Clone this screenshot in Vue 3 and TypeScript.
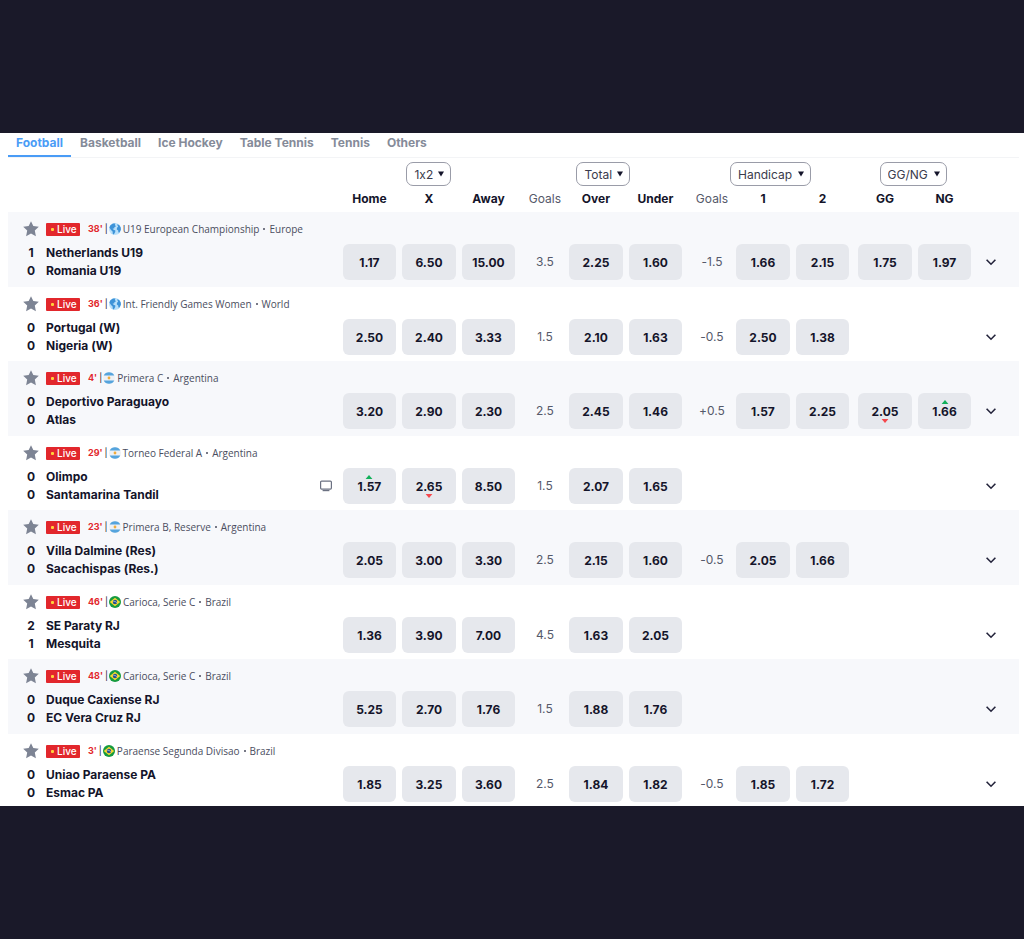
<script setup lang="ts">
import { ref } from 'vue'

type Trend = 'up' | 'down'
type Flag = 'globe' | 'argentina' | 'brazil'

interface Match {
  minute: string
  flag: Flag
  league: string
  region: string
  home: string
  away: string
  score: [number, number]
  tv?: boolean
  cells: string[]
  trends?: Record<number, Trend>
}

interface Column {
  label: string
  kind: 'odd' | 'line'
  key: string
}

const sports = ['Football', 'Basketball', 'Ice Hockey', 'Table Tennis', 'Tennis', 'Others']
const activeSport = ref('Football')

const markets = [
  { name: '1x2', span: 3, key: 'result' },
  { name: 'Total', span: 3, key: 'total' },
  { name: 'Handicap', span: 3, key: 'handicap' },
  { name: 'GG/NG', span: 2, key: 'both' },
]

const columns: Column[] = [
  { label: 'Home', kind: 'odd', key: 'home' },
  { label: 'X', kind: 'odd', key: 'draw' },
  { label: 'Away', kind: 'odd', key: 'away' },
  { label: 'Goals', kind: 'line', key: 'total-line' },
  { label: 'Over', kind: 'odd', key: 'over' },
  { label: 'Under', kind: 'odd', key: 'under' },
  { label: 'Goals', kind: 'line', key: 'handicap-line' },
  { label: '1', kind: 'odd', key: 'hc-one' },
  { label: '2', kind: 'odd', key: 'hc-two' },
  { label: 'GG', kind: 'odd', key: 'gg' },
  { label: 'NG', kind: 'odd', key: 'ng' },
]

const matches: Match[] = [
  {
    minute: "38'", flag: 'globe', league: 'U19 European Championship', region: 'Europe',
    home: 'Netherlands U19', away: 'Romania U19', score: [1, 0],
    cells: ['1.17', '6.50', '15.00', '3.5', '2.25', '1.60', '-1.5', '1.66', '2.15', '1.75', '1.97'],
  },
  {
    minute: "36'", flag: 'globe', league: 'Int. Friendly Games Women', region: 'World',
    home: 'Portugal (W)', away: 'Nigeria (W)', score: [0, 0],
    cells: ['2.50', '2.40', '3.33', '1.5', '2.10', '1.63', '-0.5', '2.50', '1.38', '', ''],
  },
  {
    minute: "4'", flag: 'argentina', league: 'Primera C', region: 'Argentina',
    home: 'Deportivo Paraguayo', away: 'Atlas', score: [0, 0],
    cells: ['3.20', '2.90', '2.30', '2.5', '2.45', '1.46', '+0.5', '1.57', '2.25', '2.05', '1.66'],
    trends: { 9: 'down', 10: 'up' },
  },
  {
    minute: "29'", flag: 'argentina', league: 'Torneo Federal A', region: 'Argentina',
    home: 'Olimpo', away: 'Santamarina Tandil', score: [0, 0], tv: true,
    cells: ['1.57', '2.65', '8.50', '1.5', '2.07', '1.65', '', '', '', '', ''],
    trends: { 0: 'up', 1: 'down' },
  },
  {
    minute: "23'", flag: 'argentina', league: 'Primera B, Reserve', region: 'Argentina',
    home: 'Villa Dalmine (Res)', away: 'Sacachispas (Res.)', score: [0, 0],
    cells: ['2.05', '3.00', '3.30', '2.5', '2.15', '1.60', '-0.5', '2.05', '1.66', '', ''],
  },
  {
    minute: "46'", flag: 'brazil', league: 'Carioca, Serie C', region: 'Brazil',
    home: 'SE Paraty RJ', away: 'Mesquita', score: [2, 1],
    cells: ['1.36', '3.90', '7.00', '4.5', '1.63', '2.05', '', '', '', '', ''],
  },
  {
    minute: "48'", flag: 'brazil', league: 'Carioca, Serie C', region: 'Brazil',
    home: 'Duque Caxiense RJ', away: 'EC Vera Cruz RJ', score: [0, 0],
    cells: ['5.25', '2.70', '1.76', '1.5', '1.88', '1.76', '', '', '', '', ''],
  },
  {
    minute: "3'", flag: 'brazil', league: 'Paraense Segunda Divisao', region: 'Brazil',
    home: 'Uniao Paraense PA', away: 'Esmac PA', score: [0, 0],
    cells: ['1.85', '3.25', '3.60', '2.5', '1.84', '1.82', '-0.5', '1.85', '1.72', '', ''],
  },
]
</script>

<template>
  <div class="page">
    <main class="panel">
      <nav class="tabs" aria-label="Sports">
        <button
          v-for="sport in sports"
          :key="sport"
          type="button"
          class="tab"
          :class="{ active: sport === activeSport }"
          @click="activeSport = sport"
        >{{ sport }}</button>
      </nav>

      <table class="board">
        <colgroup>
          <col class="c-info" />
          <col v-for="c in columns" :key="c.key" :class="`c-${c.key}`" />
          <col class="c-more" />
        </colgroup>
        <thead>
          <tr class="markets">
            <td></td>
            <th v-for="m in markets" :key="m.key" :colspan="m.span" scope="colgroup" :class="`m-${m.key}`">
              <span class="picker">
                <select :aria-label="`Market: ${m.name}`">
                  <option>{{ m.name }}</option>
                </select>
                <svg class="caret" viewBox="0 0 6 6" aria-hidden="true"><path d="M0 0.5h6L3 5.5z" /></svg>
              </span>
            </th>
            <td></td>
          </tr>
          <tr class="labels">
            <td></td>
            <th v-for="c in columns" :key="c.key" scope="col" :class="[c.kind, c.key]">{{ c.label }}</th>
            <td></td>
          </tr>
        </thead>
        <tbody>
          <tr v-for="match in matches" :key="match.home" class="match">
            <td class="info">
              <div class="meta">
                <button type="button" class="star" :aria-label="`Add ${match.home} to favourites`">
                  <svg viewBox="0 0 16 16" aria-hidden="true">
                    <path d="M8 0.3 10.3 5.1 15.8 5.8 11.8 9.5 12.9 15.2 8 12.5 3.1 15.2 4.2 9.5 0.2 5.8 5.7 5.1z" />
                  </svg>
                </button>
                <span class="live"><i class="dot"></i>Live</span>
                <span class="minute">{{ match.minute }}</span>
                <span class="bar">|</span>
                <svg v-if="match.flag === 'globe'" class="flag" viewBox="0 0 12 12" aria-hidden="true">
                  <circle cx="6" cy="6" r="6" fill="#b9e0fa" />
                  <path d="M1.4 2.2 4 0.4 6.4 0.6 5.8 2 7 3.2 5.4 4.2 5.2 5.6 3.6 5.4 4.6 6.8 6.4 7.4 6.2 9 4.8 11.4 3.8 11 3.6 8.6 2 7 0.4 4.6z" fill="#3e93d8" />
                  <path d="M8 1.2 10.2 1.9 11.7 4.4 11.9 6.6 10.6 9.4 9.4 9.6 9.2 7.4 7.8 6.4 8 4.6 9.2 4z" fill="#3e93d8" />
                </svg>
                <svg v-else-if="match.flag === 'argentina'" class="flag" viewBox="0 0 12 12" aria-hidden="true">
                  <circle cx="6" cy="6" r="6" fill="#eef1f5" />
                  <path d="M0.7 3.4a6 6 0 0 1 10.6 0zM0.7 8.6a6 6 0 0 0 10.6 0z" fill="#55a4dd" />
                  <circle cx="6" cy="6" r="1.4" fill="#f0ac3c" />
                </svg>
                <svg v-else class="flag" viewBox="0 0 12 12" aria-hidden="true">
                  <circle cx="6" cy="6" r="6" fill="#159b3f" />
                  <path d="M6 1.8 11.2 6 6 10.2 0.8 6z" fill="#f8d832" />
                  <circle cx="6" cy="6" r="2.2" fill="#23508f" />
                  <path d="M4.2 5.2q2-.2 3.7 1.5" fill="none" stroke="#dfe8f2" stroke-width="0.6" />
                </svg>
                <span class="league">{{ match.league }}</span>
                <span class="sep"></span>
                <span class="league">{{ match.region }}</span>
              </div>
              <div class="teams">
                <div class="names">
                  <span class="score">{{ match.score[0] }}</span><span>{{ match.home }}</span>
                  <span class="score">{{ match.score[1] }}</span><span>{{ match.away }}</span>
                </div>
                <svg v-if="match.tv" class="tv" viewBox="0 0 12 12" role="img" aria-label="Live stream">
                  <rect x="0.6" y="1.1" width="10.8" height="8" rx="1" />
                  <path d="M2.6 10.6h6.8" />
                </svg>
              </div>
            </td>
            <td v-for="(c, i) in columns" :key="c.key" :class="[c.kind, c.key]">
              <template v-if="match.cells[i]">
                <button v-if="c.kind === 'odd'" type="button" class="price">
                  {{ match.cells[i] }}
                  <svg v-if="match.trends?.[i]" :class="['trend', match.trends[i]]" viewBox="0 0 8 4" aria-hidden="true">
                    <path v-if="match.trends[i] === 'up'" d="M0.6 4 4 0 7.4 4z" />
                    <path v-else d="M0.6 0 4 4 7.4 0z" />
                  </svg>
                </button>
                <span v-else class="handicap">{{ match.cells[i] }}</span>
              </template>
            </td>
            <td class="more">
              <button type="button" class="expand" :aria-label="`More markets for ${match.home}`">
                <svg viewBox="0 0 12 12" aria-hidden="true"><path d="M1.6 3.8 6 8.2 10.4 3.8" /></svg>
              </button>
            </td>
          </tr>
        </tbody>
      </table>
    </main>
  </div>
</template>

<style>
body {
  margin: 0;
  background: #1a1929;
}
</style>

<style scoped>
.page {
  box-sizing: border-box;
  display: flex;
  flex-direction: column;
  height: 100vh;
  padding: 133px 0;
  font-family: Inter, "Open Sans", sans-serif;
  font-size: 12px;
  font-variant-ligatures: no-contextual;
  color: #14142a;
}
.panel {
  flex: 1;
  min-height: 0;
  overflow: hidden;
  padding: 0 5px 0 8px;
  background: #fff;
}
button,
select {
  margin: 0;
  padding: 0;
  border: 0;
  background: none;
  color: inherit;
  font: inherit;
  font-variant-ligatures: inherit;
  cursor: pointer;
}
svg {
  display: block;
}

.tabs {
  display: flex;
  gap: 1px;
  border-bottom: 1px solid #f3f4f6;
}
.tab {
  height: 24px;
  padding: 0 8px 3px;
  border-bottom: 2px solid transparent;
  font-size: 12px;
  font-weight: 700;
  line-height: 19px;
  color: #858b99;
  white-space: nowrap;
}
.tab.active {
  color: #4a9cf6;
  border-color: #4a9cf6;
}

.board {
  width: 100%;
  border-collapse: collapse;
  table-layout: fixed;
}
td,
th {
  padding: 0;
  font-weight: inherit;
}
.c-home, .c-away, .c-under, .c-hc-two, .c-ng { width: 59px; }
.c-draw, .c-over, .c-hc-one { width: 60px; }
.c-total-line, .c-handicap-line { width: 48px; }
.c-gg { width: 63px; }
.c-more { width: 45px; }

.markets th {
  height: 32px;
  text-align: center;
}
.markets .m-total,
.markets .m-handicap {
  padding-left: 4px;
}
.picker {
  position: relative;
  display: inline-block;
  vertical-align: middle;
}
.picker select {
  display: block;
  box-sizing: border-box;
  height: 24px;
  padding: 0 17px 0 7px;
  border: 1px solid #9a9ca8;
  border-radius: 7px;
  appearance: none;
  background: #fff;
  font-size: 12px;
  color: #3a3b4c;
}
.caret {
  position: absolute;
  top: 9px;
  right: 7px;
  width: 6px;
  height: 6px;
  fill: #14142a;
  pointer-events: none;
}
.labels th {
  height: 22px;
  text-align: center;
  vertical-align: top;
  font-size: 12px;
  line-height: 18px;
}
.labels .odd {
  font-weight: 700;
}
.labels .line,
.handicap {
  color: #55596a;
}
.gg {
  padding-left: 3px;
}

.match {
  height: 74px;
}
.match:nth-child(odd) {
  height: 75px;
  background: #f7f8fb;
}
.match td {
  vertical-align: top;
}
.match .info {
  padding: 8px 8px 0 15px;
}
.meta {
  display: flex;
  align-items: center;
  height: 18px;
  font-size: 10px;
  line-height: 14px;
  white-space: nowrap;
}
.star svg {
  width: 16px;
  height: 16px;
  fill: #7d8494;
}
.live {
  display: flex;
  align-items: center;
  box-sizing: border-box;
  width: 34px;
  height: 13px;
  margin: 0 8px 0 7px;
  padding-left: 5px;
  border-radius: 1px;
  background: #e2272c;
  color: #fff;
  font-weight: 500;
}
.dot {
  width: 3px;
  height: 3px;
  margin-right: 3px;
  border-radius: 1px;
  background: #ffd23c;
}
.minute {
  font-weight: 700;
  font-size: 9px;
  color: #e2272c;
}
.bar {
  margin: 0 1px 0 2px;
  font-size: 9px;
}
.flag {
  width: 12px;
  height: 12px;
  margin-right: 2px;
}
.league {
  font-family: "Open Sans", sans-serif;
  font-size: 10px;
  color: #4a4d5e;
}
.sep {
  width: 2px;
  height: 2px;
  margin: 0 4px;
  border-radius: 1px;
  background: #4a4d5e;
}
.teams {
  display: flex;
  align-items: center;
  justify-content: space-between;
  margin-top: 6px;
}
.names {
  display: grid;
  grid-template-columns: 16px auto;
  column-gap: 7px;
  font-size: 12px;
  font-weight: 700;
  line-height: 18px;
  white-space: nowrap;
}
.score {
  text-align: center;
}
.tv {
  width: 12px;
  height: 12px;
  fill: none;
  stroke: #6b7182;
  stroke-width: 1.2;
}

.match .odd {
  padding: 32px 3px 0;
}
.match .odd.gg {
  padding-left: 6px;
}
.price {
  position: relative;
  display: block;
  width: 100%;
  height: 36px;
  border-radius: 6px;
  background: #e6e8ed;
  font-size: 12px;
  font-weight: 700;
  text-align: center;
}
.trend {
  position: absolute;
  left: calc(50% - 4px);
  width: 8px;
  height: 4px;
}
.trend.up {
  top: 7px;
  fill: #12b05a;
}
.trend.down {
  bottom: 6px;
  fill: #f5474d;
}
.line {
  padding-left: 6px;
  text-align: center;
}
.match .line {
  padding-top: 32px;
  line-height: 36px;
}
.match .more {
  padding: 32px 11px 0 0;
}
.expand {
  display: grid;
  place-items: center;
  width: 100%;
  height: 36px;
}
.expand svg {
  width: 12px;
  height: 12px;
  fill: none;
  stroke: #23233a;
  stroke-width: 1.6;
}
</style>
